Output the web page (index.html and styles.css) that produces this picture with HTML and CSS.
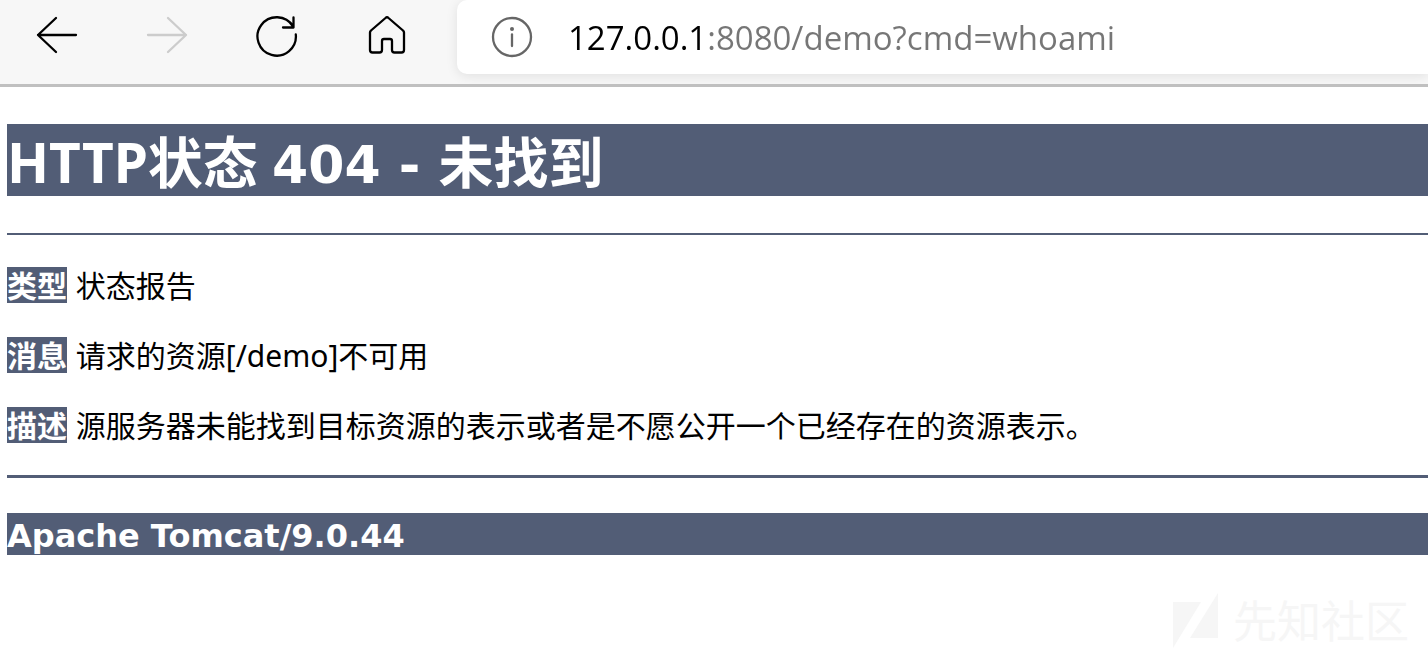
FILE: index.html
```
<!DOCTYPE html>
<html lang="zh-CN">
<head>
<meta charset="utf-8">
<title>HTTP状态 404 - 未找到</title>
<link rel="stylesheet" href="styles.css">
</head>
<body>
<header class="toolbar">
  <nav class="nav-buttons">
    <button class="nav-button" type="button" aria-label="后退">
      <svg viewBox="0 0 44 44"><path d="M41 21H3M21 4L3 21l18 17"/></svg>
    </button>
    <button class="nav-button" type="button" aria-label="前进" disabled>
      <svg viewBox="0 0 44 44"><path d="M3 21h38M23 4l18 17-18 17"/></svg>
    </button>
    <button class="nav-button" type="button" aria-label="刷新">
      <svg viewBox="0 0 44 44"><path d="M40.800 20.500A19.200 19.200 0 1 1 38 12.300M38.500 3.500V13.500H28"/></svg>
    </button>
    <button class="nav-button" type="button" aria-label="主页">
      <svg viewBox="0 0 44 44"><path d="M20.500 4Q22 2.500 23.500 4L38 16.500Q39 17.500 39 18.500V36Q39 38.500 36.500 38.500H29.500Q27 38.500 27 36V27Q27 25 25 25H19Q17 25 17 27V36Q17 38.500 14.500 38.500H7.500Q5 38.500 5 36V18.500Q5 17.500 6 16.500Z"/></svg>
    </button>
  </nav>
  <div class="address-bar">
    <button class="info-button" type="button" aria-label="站点信息">
      <svg viewBox="0 0 44 44"><circle cx="22" cy="22" r="19"/><path d="M22 19.500V31"/><circle class="dot" cx="22" cy="14" r="2"/></svg>
    </button>
    <input class="address" type="text" aria-label="地址" value="127.0.0.1:8080/demo?cmd=whoami" spellcheck="false">
  </div>
</header>
<main class="page">
  <h1 class="title">HTTP状态 <span class="code">404 - </span>未找到</h1>
  <hr class="rule">
  <section class="report">
    <p class="line"><b class="label">类型</b> 状态报告</p>
    <p class="line"><b class="label">消息</b> 请求的资源[/demo]不可用</p>
    <p class="line"><b class="label">描述</b> 源服务器未能找到目标资源的表示或者是不愿公开一个已经存在的资源表示。</p>
  </section>
  <hr class="rule rule-end">
  <h3 class="server">Apache Tomcat/9.0.44</h3>
</main>
<footer class="watermark">
  <svg class="watermark-logo" viewBox="0 0 46 56"><path d="M0 9H28L0 55ZM45 0V45H17Z"/></svg>
  <span>先知社区</span>
</footer>
</body>
</html>
```
FILE: styles.css
```
* { box-sizing: border-box; }
body {
  margin: 0;
  background: #fff;
  color: #000;
  font-family: "Noto Sans", "Noto Sans CJK SC", sans-serif;
  overflow-x: hidden;
}
button {
  padding: 0;
  border: 0;
  background: none;
}
svg { display: block; }

.toolbar {
  display: flex;
  align-items: flex-start;
  background: #f7f7f7;
  border-bottom: 3px solid #c0c0c0;
  padding-bottom: 10px;
  overflow: hidden;
}
.nav-buttons {
  display: flex;
  gap: 66px;
  padding: 14px 48px 0 35px;
}
.nav-button svg, .info-button svg {
  width: 44px;
  height: 44px;
  fill: none;
  stroke: #000;
  stroke-width: 2.3;
  stroke-linecap: round;
  stroke-linejoin: round;
}
.nav-button:disabled svg { stroke: #ccc; }
.address-bar {
  flex: 1;
  display: flex;
  align-items: center;
  gap: 34px;
  height: 74px;
  padding-left: 33px;
  background: #fff;
  border-radius: 10px 0 0 10px;
  box-shadow: 0 2px 12px #00000018;
}
.info-button svg { stroke: #666; }
.info-button .dot { fill: #666; stroke: none; }
.address {
  flex: 1;
  min-width: 0;
  height: 74px;
  padding: 0;
  border: 0;
  outline: 0;
  font-family: "Open Sans", sans-serif;
  font-size: 33px;
  color: #767676;
  background: linear-gradient(to right, #000 138px, #767676 138px);
  -webkit-background-clip: text;
  background-clip: text;
  -webkit-text-fill-color: transparent;
}

.page { padding: 37px 0 0 7px; }
.title, .server, .label {
  background: #525d76;
  color: #fff;
  font-weight: 700;
}
.title {
  margin: 0;
  padding-top: 4px;
  font-size: 55px;
  line-height: 68px;
}
.code {
  font-family: "DejaVu Sans", sans-serif;
  font-size: 52px;
  line-height: 1;
}
.rule {
  height: 2px;
  margin: 37px 0 32px;
  border: 0;
  background: #525d76;
}
.report {
  display: flex;
  flex-direction: column;
  gap: 34px;
}
.line {
  margin: 0;
  font-size: 30px;
  line-height: 34px;
}
.label {
  display: inline-block;
  margin-right: 1px;
  padding-top: 2px;
}
.rule-end {
  height: 3px;
  margin: 32px 0 35px;
}
.server {
  margin: 0;
  padding-top: 4px;
  font-family: "DejaVu Sans", sans-serif;
  font-size: 32px;
  line-height: 38px;
}
.watermark {
  display: flex;
  justify-content: flex-end;
  align-items: center;
  gap: 14px;
  margin-top: 36px;
  padding-right: 19px;
  color: #f6f6f6;
  font-size: 44px;
  line-height: 60px;
}
.watermark-logo {
  width: 46px;
  height: 56px;
  fill: #f6f6f6;
}
```
